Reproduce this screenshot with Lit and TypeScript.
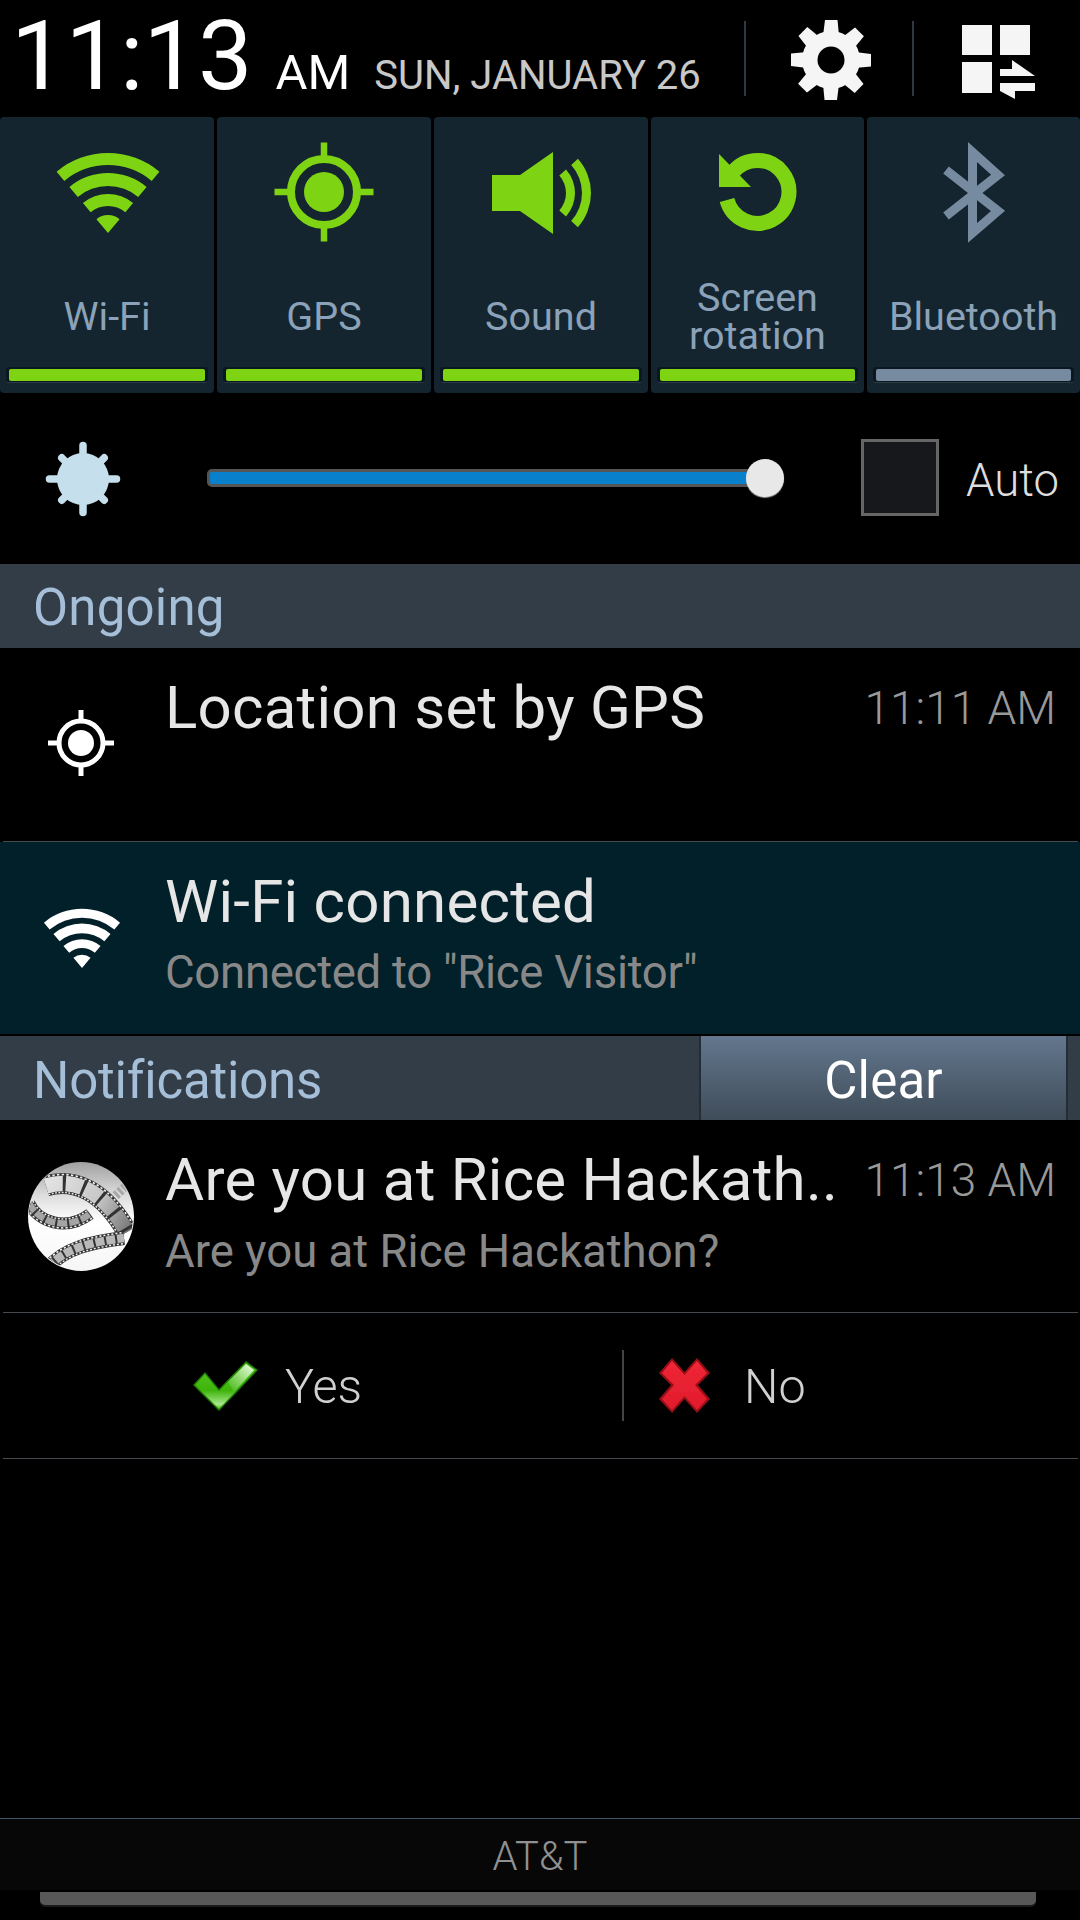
import { LitElement, html, css, svg } from "lit";
import { customElement } from "lit/decorators.js";

const pt = (cx: number, cy: number, r: number, deg: number) => {
  const a = (deg * Math.PI) / 180;
  return `${(cx + r * Math.sin(a)).toFixed(2)} ${(cy - r * Math.cos(a)).toFixed(2)}`;
};
/** Ring segment centred on (cx,cy), `dir` degrees clockwise from up, half-angle `half`. */
const ring = (cx: number, cy: number, r0: number, r1: number, dir: number, half: number) =>
  `M${pt(cx, cy, r1, dir - half)}A${r1} ${r1} 0 0 1 ${pt(cx, cy, r1, dir + half)}L${pt(cx, cy, r0, dir + half)}A${r0} ${r0} 0 0 0 ${pt(cx, cy, r0, dir - half)}Z`;
const sector = (cx: number, cy: number, r1: number, half: number) =>
  `M${cx} ${cy}L${pt(cx, cy, r1, -half)}A${r1} ${r1} 0 0 1 ${pt(cx, cy, r1, half)}Z`;

const wifi = (cx: number, cy: number, s: number, fill: string) => svg`<path fill=${fill} d=${[
  ring(cx, cy, 68 * s, 80 * s, 0, 40),
  ring(cx, cy, 47 * s, 60 * s, 0, 40),
  ring(cx, cy, 27 * s, 39 * s, 0, 40),
  sector(cx, cy, 18 * s, 40),
].join("")} />`;

const target = (cx: number, cy: number, rRing: number, sw: number, rDot: number, tick: number, tw: number, col: string) => svg`
  <circle cx=${cx} cy=${cy} r=${rRing} fill="none" stroke=${col} stroke-width=${sw} />
  <circle cx=${cx} cy=${cy} r=${rDot} fill=${col} />
  <path stroke=${col} stroke-width=${tw} d="M${cx} ${cy - tick}V${cy - rRing}M${cx} ${cy + tick}V${cy + rRing}M${cx - tick} ${cy}H${cx - rRing}M${cx + tick} ${cy}H${cx + rRing}" />`;

const GREEN = "#7ed313";
const GREY = "#768ba0";

const gear = svg`
  <circle cx="831" cy="60" r="29" fill="#f5f5f5" />
  ${[0, 45, 90, 135, 180, 225, 270, 315].map(
    (d) => svg`<path fill="#f5f5f5" transform="rotate(${d} 831 60)" d="M825 20H837.5L839 36H823Z" />`
  )}
  <circle cx="831" cy="60" r="13.5" fill="#000" />`;

const gridIcon = svg`
  <g fill="#f5f5f5">
    <rect x="962" y="25" width="30" height="30" />
    <rect x="1000" y="25" width="30" height="30" />
    <rect x="962" y="62" width="30" height="31" />
    <path d="M1000 69H1012V60L1035 76H1000Z" />
    <path d="M1000 83H1035V91H1015V99L1000 91Z" />
  </g>`;

const sun = svg`
  <circle cx="83" cy="479" r="26" fill="#c5e0ec" />
  ${[0, 45, 90, 135, 180, 225, 270, 315].map(
    (d) => svg`<line x1="83" y1="460" x2="83" y2=${d % 90 ? 449 : 445.5} stroke="#c5e0ec" stroke-width="7.5" stroke-linecap="round" transform="rotate(${d} 83 479)" />`
  )}`;

const film = (d: string, w: number, dash: string, frame = "#c4c4c4") => svg`
  <path d=${d} fill="none" stroke="#333" stroke-width=${w} />
  <path d=${d} fill="none" stroke="#f0f0f0" stroke-width=${w - 1.5} stroke-dasharray="2 2" />
  <path d=${d} fill="none" stroke="#333" stroke-width=${w - 4.5} />
  <path d=${d} fill="none" stroke=${frame} stroke-width=${w - 5.5} stroke-dasharray=${dash} />`;

const movie = svg`
  <defs>
    <linearGradient id="mv" x1="0" y1="0" x2="0" y2="1">
      <stop offset="0" stop-color="#a0a0a0" />
      <stop offset="0.3" stop-color="#dcdcdc" />
      <stop offset="0.55" stop-color="#ffffff" />
      <stop offset="1" stop-color="#f6f6f6" />
    </linearGradient>
    <linearGradient id="mf" gradientUnits="userSpaceOnUse" x1="46" y1="1186" x2="127" y2="1232">
      <stop offset="0" stop-color="#e2e2e2" />
      <stop offset="0.55" stop-color="#c8c8c8" />
      <stop offset="1" stop-color="#7a7a7a" />
    </linearGradient>
    <clipPath id="mc"><ellipse cx="81" cy="1216.5" rx="52" ry="53.5" /></clipPath>
  </defs>
  <ellipse cx="81" cy="1216.5" rx="53" ry="54.5" fill="url(#mv)" />
  <g clip-path="url(#mc)">
    <path d="M112 1199L126 1186" stroke="#a8a8a8" stroke-width="9" stroke-dasharray="3 2" fill="none" />
    ${film("M29 1203C38 1222 66 1232 90 1214", 12, "10 2", "#a4a4a4")}
    ${film("M46 1186C72 1178 102 1188 127 1232", 21, "17 3", "url(#mf)")}
    ${film("M48 1268C64 1248 92 1242 124 1238", 14, "9 2", "#b8b8b8")}
  </g>`;

const check = svg`
  <defs>
    <linearGradient id="ck" x1="0" y1="0" x2="0" y2="1">
      <stop offset="0" stop-color="#54c81c" />
      <stop offset="0.6" stop-color="#3fb40e" />
      <stop offset="0.9" stop-color="#a8e88a" />
      <stop offset="1" stop-color="#46b812" />
    </linearGradient>
    <linearGradient id="ck2" x1="0" y1="1" x2="1" y2="0">
      <stop offset="0" stop-color="#d8f5c8" stop-opacity="0" />
      <stop offset="1" stop-color="#f4fff0" />
    </linearGradient>
    <linearGradient id="xr" x1="0" y1="0" x2="0" y2="1">
      <stop offset="0" stop-color="#f02636" />
      <stop offset="1" stop-color="#e01c2c" />
    </linearGradient>
    <filter id="soft" x="-10%" y="-10%" width="120%" height="120%"><feGaussianBlur stdDeviation="0.7" /></filter>
  </defs>
  <g filter="url(#soft)">
    <path fill="#1f7a06" d="M205 1372L219 1389L246 1361L258 1370L219 1411L193 1385Z" />
    <path fill="url(#ck)" d="M205 1374L219 1391L246 1363L256 1370L219 1409L195 1385Z" />
    <path fill="url(#ck2)" d="M228 1382L246 1364L254 1370L234 1392Z" />
  </g>`;

const cross = svg`
  <g filter="url(#soft)">
    <path fill="#9a1018" d="M672 1358L684.5 1372L697 1358L710 1373L698 1385L710 1399L697 1413L684.5 1399L672 1413L659 1399L671 1385L659 1373Z" />
    <path fill="url(#xr)" d="M672 1361L684.5 1375L697 1361L707 1373L695 1385L707 1399L697 1410L684.5 1396L672 1410L662 1399L674 1385L662 1373Z" />
  </g>`;

@customElement("app-root")
export class AppRoot extends LitElement {
  static styles = css`
    :host {
      display: flex;
      flex-direction: column;
      width: 1080px;
      height: 1920px;
      background: #000;
      overflow: hidden;
      font-family: Roboto, "Liberation Sans", sans-serif;
      color: #e6e6e6;
    }
    svg { display: block; flex: none; }

    .status { height: 117px; display: flex; position: relative; flex: none; }
    .status-text { display: flex; align-items: baseline; height: 110px; box-sizing: border-box; padding: 7px 0 0 11px; white-space: nowrap; }
    .clock { font-size: 97px; font-weight: 400; line-height: 98px; color: #fff; }
    .ampm { font-size: 49px; font-weight: 400; line-height: 98px; color: #fff; margin-left: 23px; }
    .date { font-size: 40px; font-weight: 400; line-height: 98px; color: #c8c8c8; margin-left: 24px; }
    .status-icons { position: absolute; left: 0; top: 0; }

    .tiles { display: grid; grid-template-columns: 214px 214px 214px 213px 213px; gap: 3px; height: 276px; flex: none; }
    .tile { background: #142530; border-radius: 4px; display: flex; flex-direction: column; overflow: hidden; }
    .tile-label { flex: 1; display: flex; align-items: center; justify-content: center; text-align: center; padding-top: 9px; font-size: 39.5px; line-height: 38px; color: #8ba2b8; }
    .tile-bar { height: 16px; margin: 0 6px 10px; padding: 2px 3px 2px; background: #0c1820; border-bottom: 1px solid #2a3a47; border-radius: 3px; box-sizing: border-box; }
    .tile-bar i { display: block; height: 12px; border-radius: 2px; background: #7ed313; }
    .off i { background: #768ba0; }

    .bright { height: 171px; flex: none; display: flex; align-items: center; position: relative; }
    .track { position: absolute; left: 207px; top: 76px; width: 570px; height: 18px; box-sizing: border-box; border: 3px solid #555; border-radius: 5px; background: #0880cc; }
    .thumb { position: absolute; left: 746px; top: 66px; width: 38px; height: 38px; border-radius: 50%; background: #e8e8e8; box-shadow: 0 1px 1px #999; }
    .checkbox { margin: 0 0 2px 861px; width: 78px; height: 77px; box-sizing: border-box; border: 3px solid #666; background: #16181c; flex: none; }
    .auto { margin-left: 27px; font-size: 45.5px; font-weight: 300; color: #ddd; padding-top: 3px; }
    .sun-wrap { position: absolute; left: 0; top: 0; }

    .head { height: 84px; flex: none; background: #333d47; display: flex; align-items: center; padding-left: 33px; font-size: 51px; letter-spacing: 0.2px; color: #a6bfd8; position: relative; }
    .head span { padding-top: 3px; }
    .head .low { padding-top: 5px; letter-spacing: -0.2px; }
    .clear { position: absolute; left: 699px; top: 0; bottom: 0; width: 369px; padding-top: 5px; background: linear-gradient(#63778e, #3f4c59); border-left: 2px solid #222d37; border-right: 2px solid #222d37; display: flex; align-items: center; justify-content: center; color: #fff; box-sizing: border-box; }

    .row { display: flex; flex: none; box-sizing: border-box; }
    .body { flex: 1; min-width: 0; white-space: nowrap; }
    .title { font-size: 60px; letter-spacing: 0.25px; line-height: 68px; color: #e6e6e6; }
    .sub { font-size: 45.5px; line-height: 52px; color: #888; margin-top: 10px; }
    .time { font-size: 46px; font-weight: 300; line-height: 52px; color: #999; padding-right: 24px; white-space: nowrap; padding-top: 8px; }
    .r1 { height: 193px; padding-top: 26px; position: relative; }
    .r2 { height: 194px; padding-top: 26px; background: #02202a; position: relative; border-bottom: 2px solid #000; }
    .r2 .sub { margin-top: 11px; letter-spacing: -0.27px; }
    .r3 { height: 192px; padding-top: 26px; position: relative; }
    .r3 .sub { margin-top: 12px; }
    .ic-abs { position: absolute; left: 0; top: 0; }
    .pad { margin-left: 165px; }
    .rule { height: 1px; background: #444a4f; margin-left: 3px; margin-right: 2px; flex: none; }

    .actions { height: 145px; flex: none; display: flex; position: relative; }
    .act { position: absolute; font-size: 48.5px; font-weight: 300; color: #d0d0d0; top: 47px; line-height: 54px; }
    .yes { left: 285px; }
    .no { left: 744px; }
    .vline { position: absolute; left: 622px; top: 37px; width: 2px; height: 71px; background: #444; }

    .spacer { flex: 1; }
    .carrier { height: 72px; flex: none; background: #070707; border-top: 1px solid #3f5266; padding-top: 4px; box-sizing: border-box; display: flex; align-items: center; justify-content: center; font-size: 40px; font-weight: 300; color: #909090; }
    .handle { height: 30px; flex: none; box-sizing: border-box; padding: 2px 44px 0 40px; }
    .handle i { display: block; height: 13px; background: #585858; border-radius: 0 0 5px 5px; box-shadow: 0 2px 0 #1a1a1a; }
  `;

  private tile(vbX: number, icon: unknown, label: unknown, on = true) {
    return html`<div class="tile">
      <svg width="214" height="140" viewBox="${vbX} 117 214 140">${icon}</svg>
      <div class="tile-label">${label}</div>
      <div class=${on ? "tile-bar" : "tile-bar off"}><i></i></div>
    </div>`;
  }

  render() {
    const sound = svg`
      <path fill=${GREEN} d="M492 175H520L553 152V234L520 211H492Z" />
      <path fill=${GREEN} d=${ring(540, 193, 26, 35, 90, 42) + ring(540, 193, 42, 51, 90, 42)} />`;
    const rotation = svg`
      <path fill="none" stroke=${GREEN} stroke-width="15" d="M727 200A31.5 31.5 0 1 0 733 172" />
      <path fill=${GREEN} d="M719 154V187H751Z" />`;
    const bluetooth = svg`
      <path fill="none" stroke=${GREY} stroke-width="9" stroke-miterlimit="6" d="M946 170L998 211L972.5 233V152L998 175L946 216" />`;

    return html`
      <div class="status">
        <div class="status-text">
          <span class="clock">11:13</span><span class="ampm">AM</span><span class="date">SUN, JANUARY 26</span>
        </div>
        <svg class="status-icons" width="1080" height="117" viewBox="0 0 1080 117">
          <rect x="744" y="21" width="2" height="75" fill="#2d3a45" />
          <rect x="912" y="21" width="2" height="75" fill="#2d3a45" />
          ${gear}${gridIcon}
        </svg>
      </div>

      <div class="tiles">
        ${this.tile(0, wifi(108, 233, 1, GREEN), "Wi-Fi")}
        ${this.tile(217, target(324, 192, 33, 8, 20, 49.5, 6.5, GREEN), "GPS")}
        ${this.tile(434, sound, "Sound")}
        ${this.tile(651, rotation, html`Screen<br />rotation`)}
        ${this.tile(867, bluetooth, "Bluetooth", false)}
      </div>

      <div class="bright">
        <svg class="sun-wrap" width="160" height="171" viewBox="0 393 160 171">${sun}</svg>
        <div class="track"></div>
        <div class="thumb"></div>
        <div class="checkbox"></div>
        <div class="auto">Auto</div>
      </div>

      <div class="head"><span>Ongoing</span></div>

      <div class="row r1">
        <svg class="ic-abs" width="166" height="193" viewBox="0 648 166 193">${target(81, 743, 22, 5, 13, 33, 5, "#fff")}</svg>
        <div class="body pad"><div class="title">Location set by GPS</div></div>
        <div class="time">11:11 AM</div>
      </div>
      <div class="rule"></div>
      <div class="row r2">
        <svg class="ic-abs" width="166" height="192" viewBox="0 842 166 192">${wifi(82, 968, 0.74, "#fff")}</svg>
        <div class="body pad">
          <div class="title">Wi-Fi connected</div>
          <div class="sub">Connected to "Rice Visitor"</div>
        </div>
      </div>

      <div class="head">
        <span class="low">Notifications</span>
        <div class="clear">Clear</div>
      </div>

      <div class="row r3">
        <svg class="ic-abs" width="166" height="192" viewBox="0 1120 166 192">${movie}</svg>
        <div class="body pad">
          <div class="title">Are you at Rice Hackath..</div>
          <div class="sub">Are you at Rice Hackathon?</div>
        </div>
        <div class="time">11:13 AM</div>
      </div>
      <div class="rule"></div>

      <div class="actions">
        <svg class="ic-abs" width="720" height="145" viewBox="0 1313 720 145">${check}${cross}</svg>
        <span class="act yes">Yes</span>
        <div class="vline"></div>
        <span class="act no">No</span>
      </div>
      <div class="rule"></div>

      <div class="spacer"></div>

      <div class="carrier">AT&amp;T</div>
      <div class="handle"><i></i></div>
    `;
  }
}
